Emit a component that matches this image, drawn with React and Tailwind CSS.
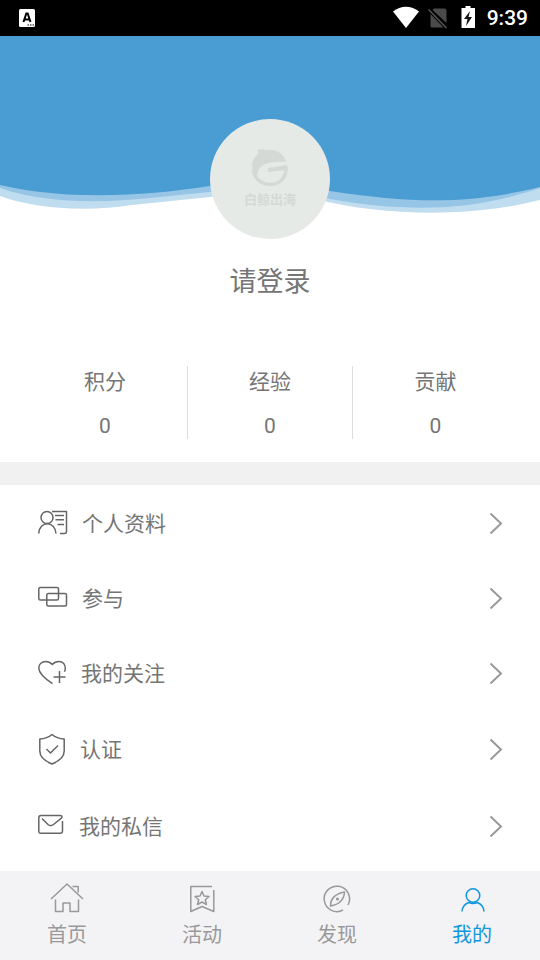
const line = { fill: "none", stroke: "currentColor", strokeWidth: 1.5, strokeLinecap: "butt", strokeLinejoin: "round" };

function StatusBar() {
  return (
    <header className="flex h-9 items-center justify-between bg-black pl-[19px] pr-3 text-white">
      <svg className="h-[18px] w-4" viewBox="0 0 16 18" aria-hidden="true">
        <rect width="16" height="18" rx="1.5" fill="#fff" />
        <path d="M4.500 13 7.300 4.500h1.400L11.500 13M5.500 10.500h5" fill="none" stroke="#000" strokeWidth="2" />
        <path d="M8.500 16h1.500M11 16h1.500M13.500 16h1.500" stroke="#000" strokeWidth="1.2" />
      </svg>
      <div className="flex items-center">
        <svg className="h-6 w-[84px]" viewBox="0 0 84 24" aria-hidden="true">
          <path d="M0 5.500C7.500-.8 18.500-.8 26 5.500L13 22Z" fill="#fff" />
          <path d="M41 2.500h10.500q2 0 2 2V17L39.500 4ZM37.500 8 50.500 21.500H39q-1.500 0-1.500-1.500Z" fill="#4a4a4a" />
          <path d="m35.500 3.500 18 18.500" stroke="#555" strokeWidth="1.500" />
          <path d="M72.500 0h5v2H82v20H68.500V2h4Z" fill="#fff" />
          <path d="m77 5-6 8h3.500l-1.500 7 6-9h-3.500Z" fill="#111" />
        </svg>
        <time className="ml-2.5 font-['Roboto','Noto_Sans_CJK_SC',sans-serif] text-[21px] font-medium leading-[26px]">9:39</time>
      </div>
    </header>
  );
}

function Profile() {
  return (
    <section className="relative flex flex-col items-center pt-[83px]">
      <svg className="absolute inset-x-0 top-0 h-[180px] w-full" viewBox="0 0 540 180" preserveAspectRatio="none" aria-hidden="true">
        <path d="M0 0H540V164C478 180 390 182 315 163C280 153 240 156 210 161L132 169C80 177 30 171 0 160Z" fill="#c0ddef" />
        <path d="M0 0H540V152C470 176 405 176 330 163C290 149 245 150 210 156L150 162C95 168 40 166 0 152Z" fill="#97c5e6" />
        <path d="M0 0H540V151C470 168 415 168 330 155C285 143 245 148 210 150C140 161 65 164 0 149Z" fill="#4a9dd3" />
      </svg>
      <div className="relative flex h-[120px] w-[120px] flex-col items-center rounded-full bg-[#e6eae7] pt-[30px] text-[#d5d9d6]">
        <svg className="h-10 w-[38px]" viewBox="0 0 38 40" aria-hidden="true">
          <path d="M6 1.500C9-.5 13 .7 16 1c9-1 16 3 19.500 11.500C26 13 17 12.500 11 17c-4 3-4.500 6-4 10C-1 20 0 12 5 7 8 4 8 3 6 1.500Z" fill="currentColor" />
          <path d="M35 17.500C36 28 29 35.500 19.500 35.500 10 35.500 2.500 29 2.500 19.500" fill="none" stroke="currentColor" strokeWidth="3.5" />
          <path d="M17 19 36 16v5L17 23Z" fill="currentColor" />
        </svg>
        <span className="text-[13px] font-bold leading-5">白鲸出海</span>
      </div>
      <button type="button" className="relative mt-[23px] text-[27px] leading-9 text-[#757575]">请登录</button>
    </section>
  );
}

const stats = [["积分", 0], ["经验", 0], ["贡献", 0]];

function Stats() {
  return (
    <dl className="mt-[68px] grid grid-cols-3 divide-x divide-[#dddddd] pl-[23px] pr-[22px]">
      {stats.map(([name, value]) => (
        <div key={name} className="flex h-[73px] flex-col items-center">
          <dt className="text-[21px] leading-7">{name}</dt>
          <dd className="mt-4 font-['Roboto','Noto_Sans_CJK_SC',sans-serif] text-[21px] leading-8">{value}</dd>
        </div>
      ))}
    </dl>
  );
}

const entries = [
  {
    label: "个人资料",
    row: "h-[75px]",
    icon: (
      <svg className="h-8 w-[30px]" viewBox="0 0 30 32" aria-hidden="true" {...line}>
        <circle cx="9" cy="10.500" r="6" />
        <path d="M.7 26.500C1 20.500 5 16.700 9.300 16.700S17.500 20.500 18 26.500M14 4.500h14.500v20q0 2-2 2H22M17 8.500H26M17.500 12.700H26M19.500 17.500H26" />
      </svg>
    ),
  },
  {
    label: "参与",
    row: "h-[75px]",
    icon: (
      <svg className="h-8 w-[30px]" viewBox="0 0 30 32" aria-hidden="true" {...line}>
        <rect x=".8" y="5.500" width="19.700" height="12.500" rx="1.500" />
        <rect x="8.800" y="11.500" width="19.700" height="12.500" rx="1.500" />
      </svg>
    ),
  },
  {
    label: "我的关注",
    row: "h-[75px]",
    icon: (
      <svg className="h-8 w-[29px]" viewBox="0 0 29 32" aria-hidden="true" {...line}>
        <path d="M14.500 26.700C6 21 .8 16 .8 11 .8 7 4 4.500 7.500 4.500q4 0 6.800 3Q17 4.500 21 4.500c4 0 6.500 3 6.300 7q-.1 1.500-.8 3.200M21.500 14v12M15.500 20H27.500" />
      </svg>
    ),
  },
  {
    label: "认证",
    row: "h-[77px]",
    icon: (
      <svg className="h-8 w-7" viewBox="0 0 28 32" aria-hidden="true" {...line}>
        <path d="M14 1.500C10.500 4.500 6 5.800 1.800 6v12c0 5 5 10 12.200 13 7.200-3 12.200-8 12.200-13V6C22 5.800 17.500 4.500 14 1.500ZM8.500 16l4 4 7.500-7.500" />
      </svg>
    ),
  },
  {
    label: "我的私信",
    row: "h-[78px]",
    icon: (
      <svg className="h-8 w-[27px]" viewBox="0 0 27 32" aria-hidden="true" {...line}>
        <path d="M24.500 11v10q0 2.300-2.300 2.300H3Q.8 23.300.8 21V8Q.8 5.500 3 5.500h19q2.800 0 1.700 2.300L15.500 14.500q-3 2.200-5.500 0L4 8.500" />
      </svg>
    ),
  },
];

function Menu() {
  return (
    <ul className="pb-1.5">
      {entries.map(({ label, row, icon }) => (
        <li key={label}>
          <button type="button" className={`flex w-full items-center pl-[38px] pr-[37px] text-left ${row}`}>
            <span className="text-[#666666]">{icon}</span>
            <span className="ml-3.5 flex-1 pb-0.5 text-[21px] leading-8">{label}</span>
            <svg className="h-[22px] w-3.5 text-[#999999]" viewBox="0 0 14 22" aria-hidden="true" {...line} strokeWidth="2" strokeLinejoin="miter">
              <path d="m1.500 1.500 10.500 10-10.500 10" />
            </svg>
          </button>
        </li>
      ))}
    </ul>
  );
}

const tabs = [
  {
    label: "首页",
    color: "text-[#999999]",
    icon: (
      <path d="M0 17 16 2l16 15M4.500 17.500V29.500H12V21h7v8.500h8.500V17.500M21.500 4.500h5.700v6" />
    ),
  },
  {
    label: "活动",
    color: "text-[#999999]",
    icon: (
      <>
        <path d="M26 4.500H4.800v25L16 24.500 27.800 29.500V8" />
        <path d="m16 9.500 2 4.500 5 .5-3.700 3.300 1.200 4.700-4.500-2.500-4.500 2.500 1.200-4.700L9 14.500l5-.5Z" />
      </>
    ),
  },
  {
    label: "发现",
    color: "text-[#999999]",
    icon: (
      <>
        <path d="M22 28A12.700 12.700 0 1 1 27 23M9.500 24C9.500 17.500 13 12 23.500 10 23 18.500 18 22.500 9.500 24Z" />
        <circle cx="16.500" cy="17" r=".8" />
      </>
    ),
  },
  {
    label: "我的",
    color: "text-[#1296db]",
    active: true,
    icon: (
      <>
        <circle cx="17" cy="13.500" r="6.800" />
        <path d="M6 29.500C6.500 24 9.500 21.500 13 20.500q4 2 8 0c3.500 1 6.500 3.500 7 9" />
      </>
    ),
  },
];

function TabBar() {
  return (
    <nav className="grid h-[89px] grid-cols-4 bg-[#f3f3f6]">
      {tabs.map(({ label, color, icon, active }) => (
        <a key={label} href="#" aria-current={active ? "page" : undefined} className={`flex flex-col items-center pr-px pt-[11px] ${color}`}>
          <svg className="h-8 w-[34px]" viewBox="-1 0 34 32" aria-hidden="true" {...line}>{icon}</svg>
          <span className="mt-1 text-[20px] leading-8">{label}</span>
        </a>
      ))}
    </nav>
  );
}

export default function App() {
  return (
    <div className="flex min-h-screen flex-col bg-white font-['Noto_Sans_CJK_SC','Noto_Sans',sans-serif] text-[#757575]">
      <StatusBar />
      <main className="flex-1">
        <Profile />
        <Stats />
        <div className="mt-[23px] h-[23px] bg-[#f1f1f1]" />
        <Menu />
      </main>
      <TabBar />
    </div>
  );
}
